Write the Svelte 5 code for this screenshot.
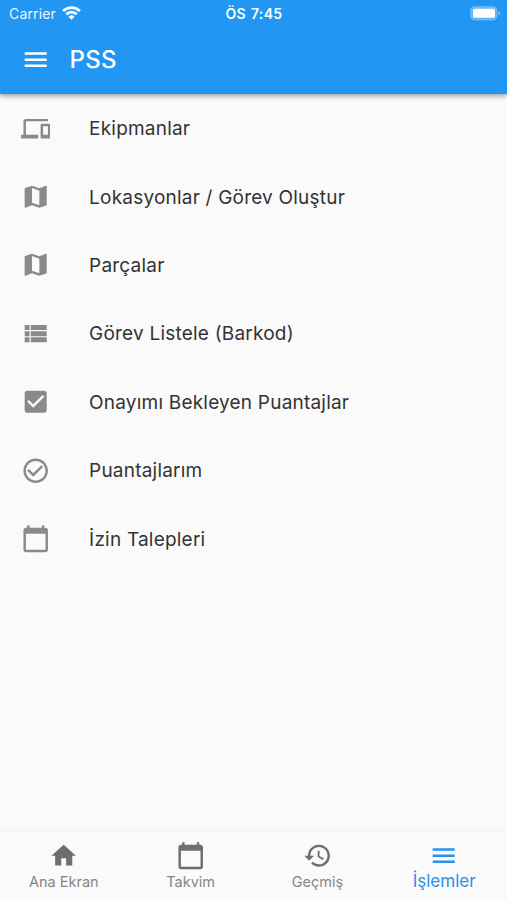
<script lang="ts">
	const icons = {
		menu: "M3 18h18v-2H3v2zm0-5h18v-2H3v2zm0-7v2h18V6H3z",
		devices: "M4 6h18V4H4c-1.1 0-2 .9-2 2v11H0v3h14v-3H4V6zm19 2h-6c-.55 0-1 .45-1 1v10c0 .55.45 1 1 1h6c.55 0 1-.45 1-1V9c0-.55-.45-1-1-1zm-1 9h-4v-7h4v7z",
		map: "M20.5 3l-.16.03L15 5.1 9 3 3.36 4.9c-.21.07-.36.25-.36.48V20.5c0 .28.22.5.5.5l.16-.03L9 18.9l6 2.1 5.64-1.9c.21-.07.36-.25.36-.48V3.5c0-.28-.22-.5-.5-.5zM15 19l-6-2.11V5l6 2.11V19z",
		list: "M3 14h4v-4H3v4zm0 5h4v-4H3v4zM3 9h4V5H3v4zm5 5h13v-4H8v4zm0 5h13v-4H8v4zM8 5v4h13V5H8z",
		checkBox: "M19 3H5c-1.11 0-2 .9-2 2v14c0 1.1.89 2 2 2h14c1.11 0 2-.9 2-2V5c0-1.1-.89-2-2-2zm-9 14l-5-5 1.41-1.41L10 14.17l7.59-7.59L19 8l-9 9z",
		checkCircle: "M16.59 7.58L10 14.17l-3.59-3.58L5 12l5 5 8-8zM12 2C6.48 2 2 6.48 2 12s4.48 10 10 10 10-4.48 10-10S17.52 2 12 2zm0 18c-4.42 0-8-3.58-8-8s3.58-8 8-8 8 3.58 8 8-3.58 8-8 8z",
		calendar: "M20 3h-1V1h-2v2H7V1H5v2H4c-1.1 0-2 .9-2 2v16c0 1.1.9 2 2 2h16c1.1 0 2-.9 2-2V5c0-1.1-.9-2-2-2zm0 18H4V8h16v13z",
		home: "M10 20v-6h4v6h5v-8h3L12 3 2 12h3v8z",
		history: "M13 3c-4.97 0-9 4.03-9 9H1l3.89 3.89.07.14L9 12H6c0-3.87 3.13-7 7-7s7 3.13 7 7-3.13 7-7 7c-1.93 0-3.68-.79-4.94-2.06l-1.42 1.42C8.27 19.99 10.51 21 13 21c4.97 0 9-4.03 9-9s-4.03-9-9-9zm-1 5v5l4.28 2.54.72-1.21-3.5-2.08V8H12z",
	};

	const items = [
		{ icon: icons.devices, title: "Ekipmanlar" },
		{ icon: icons.map, title: "Lokasyonlar / Görev Oluştur" },
		{ icon: icons.map, title: "Parçalar" },
		{ icon: icons.list, title: "Görev Listele (Barkod)" },
		{ icon: icons.checkBox, title: "Onayımı Bekleyen Puantajlar" },
		{ icon: icons.checkCircle, title: "Puantajlarım" },
		{ icon: icons.calendar, title: "İzin Talepleri" },
	];

	const tabs = [
		{ icon: icons.home, label: "Ana Ekran" },
		{ icon: icons.calendar, label: "Takvim" },
		{ icon: icons.history, label: "Geçmiş" },
		{ icon: icons.menu, label: "İşlemler" },
	];

	let selected = $state(3);
</script>

{#snippet icon(path: string)}
	<svg class="icon" viewBox="0 0 24 24" aria-hidden="true"><path d={path} /></svg>
{/snippet}

<div class="screen">
	<header>
		<div class="status-bar">
			<div class="carrier">
				<span>Carrier</span>
				<svg class="wifi" viewBox="0 0 19 14" aria-hidden="true">
					<path d="M1.1 5a12 12 0 0 1 16.8 0" />
					<path d="M4.3 8.3a7.4 7.4 0 0 1 10.4 0" />
					<path class="dot" d="M9.5 13.8 6.5 10.8a4.3 4.3 0 0 1 6 0z" />
				</svg>
			</div>
			<span class="time">ÖS 7:45</span>
			<div class="battery-side">
				<svg class="battery" viewBox="0 0 31 15" aria-hidden="true">
					<rect class="shell" x="0.8" y="0.8" width="25.9" height="13" rx="3.6" />
					<rect class="level" x="3" y="2.8" width="22" height="9" rx="1.6" />
					<path class="tip" d="M28.3 5v4.6c1.1-.4 1.8-1.3 1.8-2.3s-.7-1.9-1.8-2.3z" />
				</svg>
			</div>
		</div>
		<div class="toolbar">
			<button class="menu" aria-label="Menü">{@render icon(icons.menu)}</button>
			<h1>PSS</h1>
		</div>
	</header>

	<main>
		{#each items as item}
			<button class="item">
				{@render icon(item.icon)}
				<span>{item.title}</span>
			</button>
		{/each}
	</main>

	<nav>
		{#each tabs as tab, i}
			<button class="tab" class:active={selected === i} onclick={() => (selected = i)}>
				{@render icon(tab.icon)}
				<span>{tab.label}</span>
			</button>
		{/each}
	</nav>
</div>

<style>
	:global(body) {
		margin: 0;
		background: #fafafa;
	}
	.screen {
		display: flex;
		flex-direction: column;
		height: 100vh;
		overflow: hidden;
		background: #fafafa;
		font-family: Inter, "Liberation Sans", sans-serif;
	}
	button {
		padding: 0;
		border: none;
		background: none;
		font: inherit;
		color: inherit;
		cursor: pointer;
	}
	.icon {
		display: block;
		flex: none;
		width: 29.4px;
		height: 29.4px;
		fill: currentColor;
	}
	header {
		flex: none;
		height: 93.6px;
		background: #2196f3;
		color: #fff;
		box-shadow: 0 2px 5px rgba(0, 0, 0, 0.38);
	}
	.status-bar {
		display: grid;
		grid-template-columns: 1fr auto 1fr;
		align-items: center;
		height: 26px;
		padding: 0 6px 0 9px;
		box-sizing: border-box;
		font-size: 14px;
	}
	.carrier {
		display: flex;
		align-items: center;
		gap: 6px;
		letter-spacing: 0.15px;
	}
	.carrier span {
		opacity: 0.93;
	}
	.wifi {
		width: 19px;
		height: 14px;
		fill: none;
		stroke: #fff;
		stroke-width: 2.8;
	}
	.wifi .dot {
		fill: #fff;
		stroke: none;
	}
	.time {
		font-weight: 600;
		letter-spacing: 0.35px;
		word-spacing: 1px;
		transform: translateX(-1px);
	}
	.battery-side {
		display: flex;
		justify-content: flex-end;
	}
	.battery {
		width: 31px;
		height: 15px;
		fill: #fff;
	}
	.battery .shell {
		fill: #64b5f6;
		stroke: #7cc0f8;
	}
	.battery .tip {
		fill: #7cc0f8;
	}
	.toolbar {
		display: flex;
		align-items: center;
		height: 67.6px;
		padding-left: 20.6px;
		gap: 19.6px;
	}
	h1 {
		margin: 0;
		font-size: 24px;
		font-weight: 500;
		letter-spacing: 0.3px;
	}
	main {
		flex: 1;
		display: flex;
		flex-direction: column;
		padding-top: 0.5px;
	}
	.item {
		display: flex;
		align-items: center;
		gap: 38.9px;
		height: 68.4px;
		padding-left: 20.8px;
		color: #8a8a8a;
		text-align: left;
	}
	.item span {
		padding-top: 1px;
		color: #333;
		font-size: 19px;
		letter-spacing: 0.21px;
	}
	nav {
		flex: none;
		display: grid;
		grid-template-columns: repeat(4, 1fr);
		height: 68.4px;
		box-shadow: 0 -1px 4px rgba(0, 0, 0, 0.04);
	}
	.tab {
		display: flex;
		flex-direction: column;
		align-items: center;
		padding-top: 9px;
		padding-left: 1px;
		color: #6e6e6e;
	}
	.tab span {
		margin-top: 2px;
		color: #868686;
		font-size: 14.5px;
		line-height: 20px;
	}
	.tab.active,
	.tab.active span {
		color: #2594ee;
	}
	.tab.active span {
		margin-top: 1px;
		font-size: 17px;
	}
</style>
